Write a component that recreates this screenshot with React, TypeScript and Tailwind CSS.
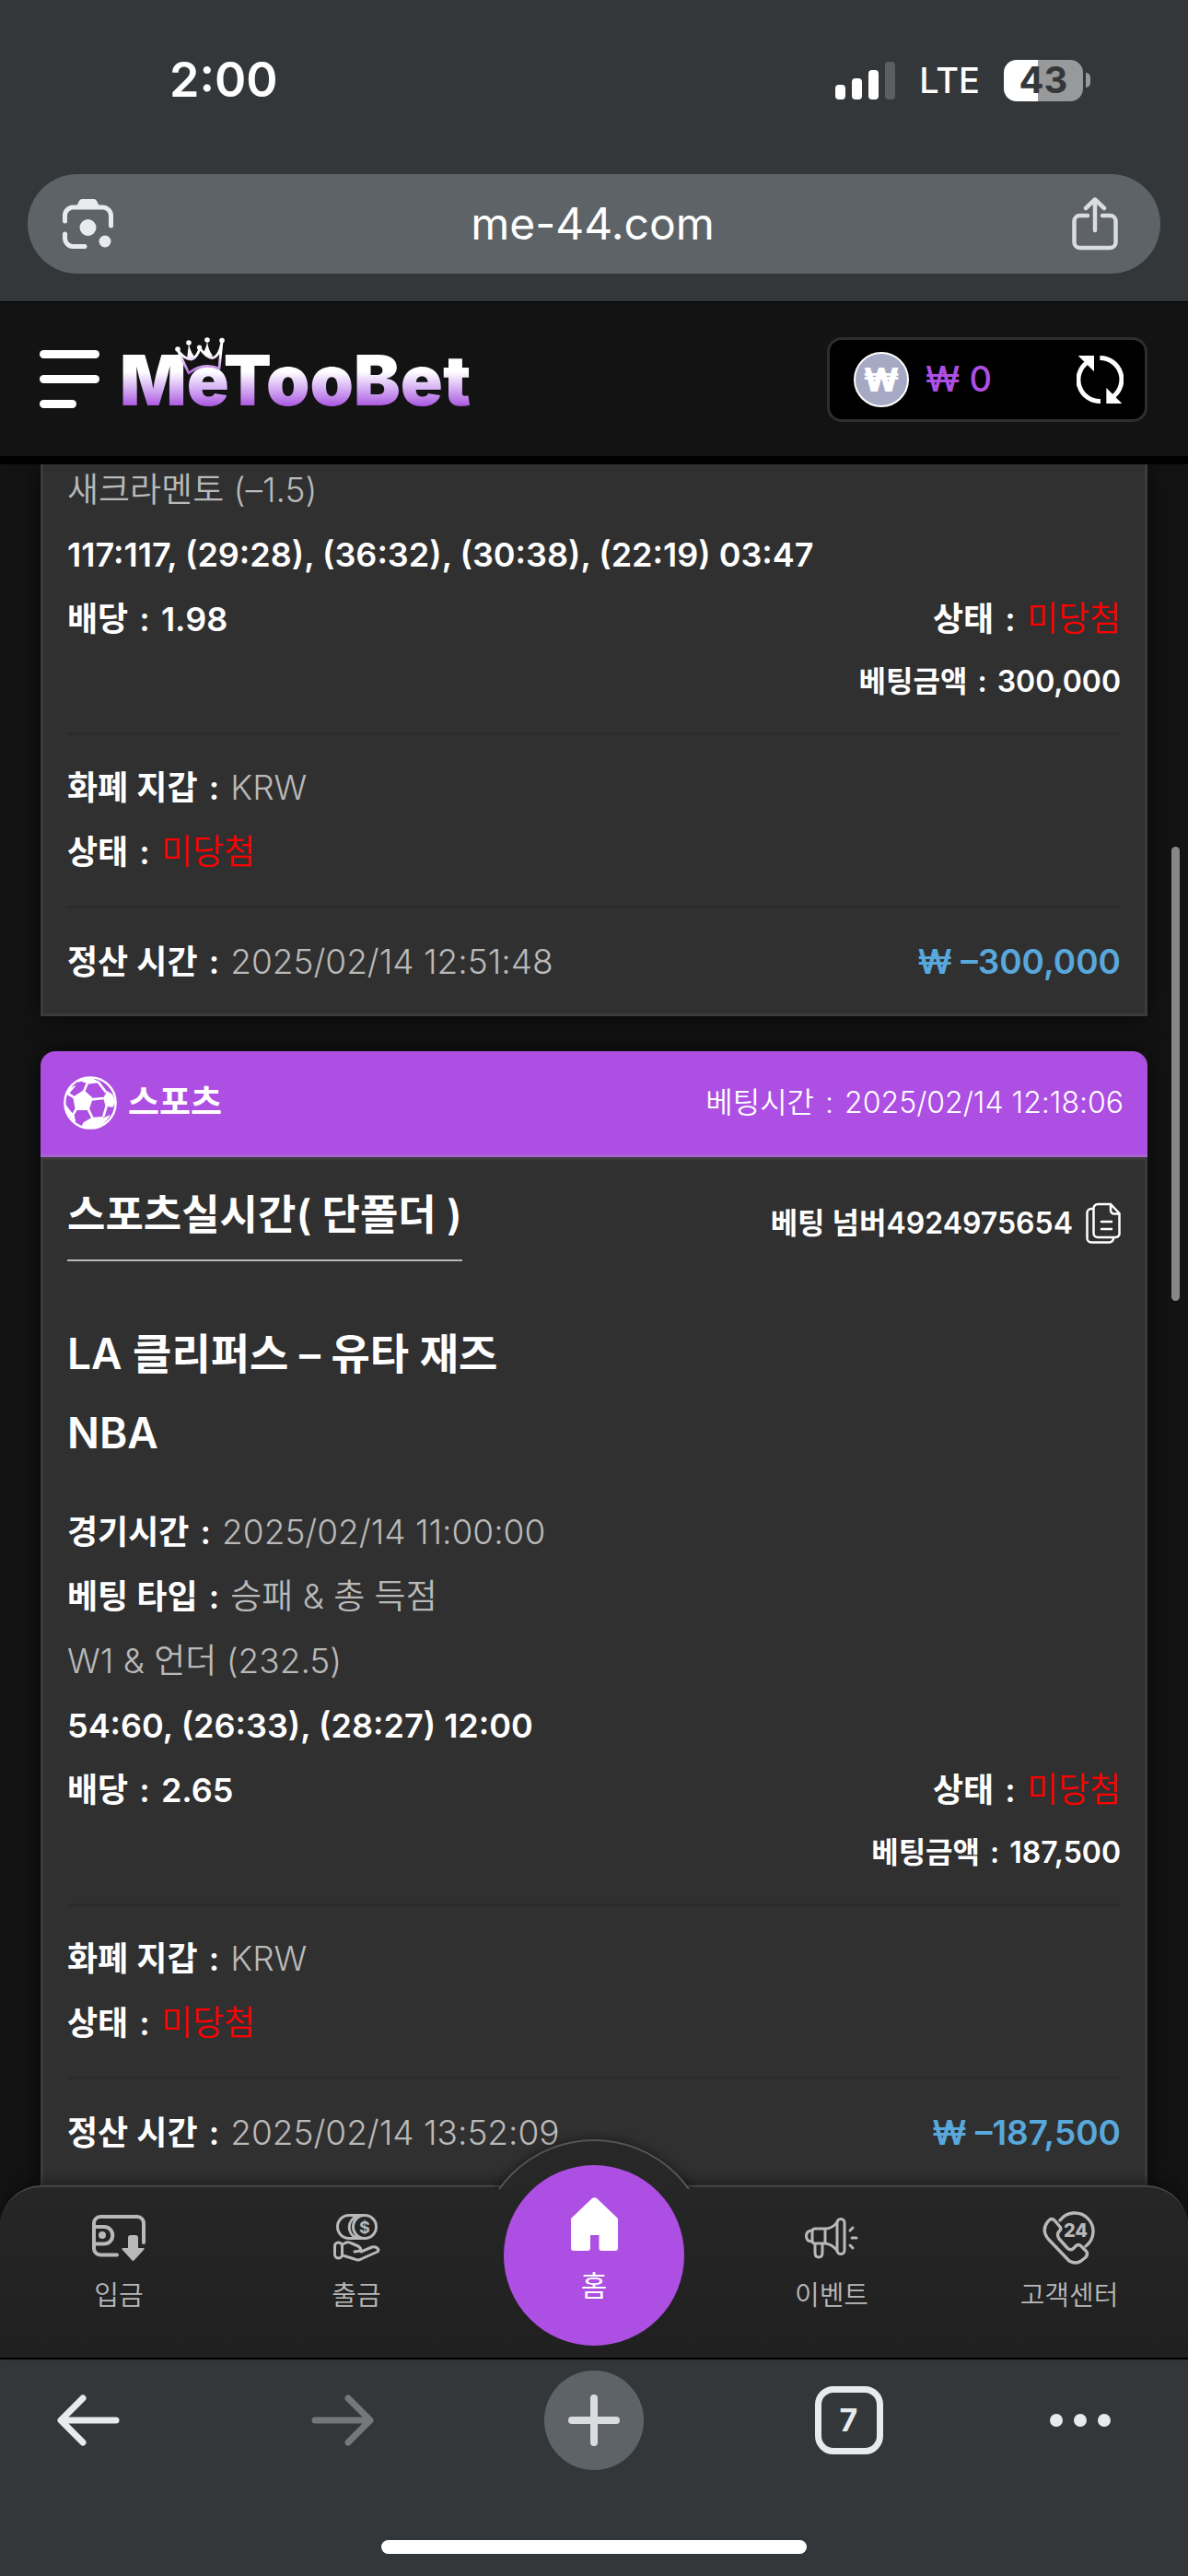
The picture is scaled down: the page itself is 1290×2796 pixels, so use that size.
import type { ReactNode } from "react";

function LensIcon() {
  return (
    <svg viewBox="0 0 55 55" className="size-[55px]" fill="none" stroke="#e8ebee" strokeWidth="5" strokeLinecap="round">
      <path d="M2.5 24V18a9 9 0 0 1 9-9H43a9 9 0 0 1 9.500 9V29M2.500 38V42a9 9 0 0 0 9 9.500H24" />
      <path d="M14 10 18 2Q19 0 21 0H34Q36 0 37 2L41 10Z" fill="#e8ebee" stroke="none" />
      <circle cx="27.500" cy="31" r="9" fill="#e8ebee" stroke="none" />
      <circle cx="46" cy="46" r="6.500" fill="#e8ebee" stroke="none" />
    </svg>
  );
}

function ShareIcon() {
  return (
    <svg viewBox="0 0 50 58" className="h-[58px] w-[50px]" fill="none" stroke="#dadce0" strokeWidth="4.500" strokeLinecap="round" strokeLinejoin="round">
      <path d="M17 20H8.500a6 6 0 0 0-6 6V49a6 6 0 0 0 6 6H41.500a6 6 0 0 0 6-6V26a6 6 0 0 0-6-6H33" />
      <path d="M25 36V3M15 12 25 2.500 35 12" />
    </svg>
  );
}

function Crown() {
  return (
    <svg viewBox="0 0 54 42" className="absolute -top-0.5 left-[60px] h-[42px] w-[54px]" fill="none">
      <defs>
        <linearGradient id="crown" x1="0" y1="0" x2="0" y2="42" gradientUnits="userSpaceOnUse">
          <stop offset="0.45" stopColor="#fff" />
          <stop offset="1" stopColor="#a94fdf" />
        </linearGradient>
      </defs>
      <path d="M3 14 15 39Q30 27 48 34L51 5Q48 22 40 22.500 34 22 27 12 24 22 18 24 10 24 3 14Z" fill="#131313" stroke="url(#crown)" strokeWidth="2.800" strokeLinejoin="round" />
      <path d="M15 7Q17 17 22 22L13 24ZM35 4Q34 12 31 16L37 22 41 20Q36 14 35 4Z" fill="url(#crown)" />
      <g fill="#fff">
        <circle cx="3" cy="13" r="2.800" />
        <circle cx="15" cy="6" r="2.800" />
        <circle cx="26.500" cy="11" r="2.600" />
        <circle cx="35" cy="3" r="2.800" />
        <circle cx="51" cy="3.500" r="2.800" />
      </g>
    </svg>
  );
}

function RefreshIcon() {
  return (
    <svg viewBox="0 0 153 156" className="h-[52px] w-[51px]" fill="none" stroke="#fff" strokeWidth="15">
      <path d="M78 148.500A70 70 0 0 1 36 21" />
      <path d="M76 7.500A70 70 0 0 1 118 134" />
      <path d="M5 0H57V52ZM148 156H97V105Z" fill="#fff" stroke="none" />
    </svg>
  );
}

function BallIcon() {
  return (
    <svg viewBox="0 0 174 174" className="size-[58px]" fill="none" stroke="#fff" strokeWidth="8" strokeLinejoin="round">
      <circle cx="87" cy="87" r="83" strokeWidth="7" />
      <path d="M66 50 91 73 80 107 42 107 35 70Z" fill="#fff" />
      <path d="M66 50 78 22M91 76 131 72M80 107 95 138M42 107 29 128M35 70 14 57M78 22 112 18M112 18 138 52M140 97 130 132M95 138 66 155M29 128 36 148M95 138 130 136" />
      <path d="M48 18Q68 5 92 7L112 18 78 23 58 16ZM131 72 142 50 158 60 168 84 160 100 138 97ZM66 152 92 142 130 138 150 128Q126 170 82 170L60 162ZM8 62 18 56 38 32 22 40ZM5 92 20 112 34 128 36 146Q10 124 5 92Z" fill="#fff" strokeWidth="3" />
    </svg>
  );
}

function CopyIcon() {
  return (
    <svg viewBox="0 0 38 46" className="h-[46px] w-[38px]" fill="none" stroke="#fff" strokeWidth="2.500" strokeLinecap="round" strokeLinejoin="round">
      <path d="M27 2H13a4.500 4.500 0 0 0-4.500 4.500V33.500A4.500 4.500 0 0 0 13 38H32.500a4 4 0 0 0 4-4.500V12ZM27 2V8.500a4 4 0 0 0 4 4H36.500M8 7H6a4.500 4.500 0 0 0-4.500 4.500V39A4.500 4.500 0 0 0 6 43.500H26a4.500 4.500 0 0 0 4-5M17 21H28M17 29H28" />
    </svg>
  );
}

function DepositIcon() {
  return (
    <svg viewBox="0 0 58 51" className="h-[51px] w-[58px]" fill="none" stroke="#b9b9b9" strokeWidth="4" strokeLinecap="round">
      <path d="M27 43.500H9a7 7 0 0 1-7-7V9a7 7 0 0 1 7-7H49a7 7 0 0 1 7 7V30" />
      <path d="M3 13H13A9 9 0 0 1 13 31.500H3" />
      <circle cx="11" cy="22" r="4" fill="#b9b9b9" stroke="none" />
      <path d="M39 25Q39 22 42 22H47Q50 22 50 25V36H55Q58 36 56 38L46 49Q44.500 51 43 49L33 38Q31 36 34 36H39Z" fill="#b9b9b9" stroke="none" />
    </svg>
  );
}

function WithdrawIcon() {
  return (
    <svg viewBox="0 0 51 52" className="h-[52px] w-[51px]" fill="none" stroke="#b9b9b9" strokeWidth="3" strokeLinecap="round" strokeLinejoin="round">
      <circle cx="34" cy="14" r="12.500" />
      <path d="M26 2.500A12.500 12.500 0 0 0 25 26M17 1.500A12.500 12.500 0 0 0 17 26.500M17 1.500H34M17 26.500H34" />
      <text x="34" y="20.500" textAnchor="middle" fontSize="18" fontWeight="700" fill="#b9b9b9" stroke="none" fontFamily="Inter">$</text>
      <rect x="1.500" y="31" width="8" height="17" rx="4" />
      <path d="M10 33 14 31Q17 30 20 32L27 35Q30 37 30 40L23 41M30 41 42 36Q47 35 49 39L48 41 30 49Q27 51 23 49L10 45" />
    </svg>
  );
}

function HomeIcon() {
  return (
    <svg viewBox="0 0 51 58" className="h-[58px] w-[51px]" fill="#fff">
      <path d="M22.500 1.500Q25.500-1 28.500 1.500L51 23V55Q51 58 48 58H33Q30.500 58 30.500 55V41H21V55Q21 58 18 58H3Q0 58 0 55V23Z" />
    </svg>
  );
}

function EventIcon() {
  return (
    <svg viewBox="0 0 58 45" className="h-[45px] w-[58px]" fill="none" stroke="#b9b9b9" strokeWidth="3" strokeLinecap="round" strokeLinejoin="round">
      <rect x="35" y="1.500" width="8" height="38" rx="4" />
      <path d="M35 5Q30 12 22 12H11Q8 12 8 15V25Q8 28 11 28H22Q30 29 35 36M22 12V28M8 14Q1.500 14 1.500 20T8 26M11 28V38Q11 43 15 43T19 38V28M49 14 52 11M51 22H56M49 30 52 33" />
    </svg>
  );
}

function SupportIcon() {
  return (
    <svg viewBox="0 0 58 58" className="size-[58px]" fill="none" stroke="#b9b9b9" strokeWidth="3.400" strokeLinecap="round" strokeLinejoin="round">
      <path d="M19 10A20 20 0 1 1 47 38" />
      <path d="M6 11Q10 6 14 11L19 17Q21 20 18 22 15 25 18 30L27 40Q30 43 33 41L36 38Q39 35 42 38L47 43Q50 46 47 50L42 54Q36 58 29 54L7 31Q-2 21 6 11Z" />
      <text x="36" y="28" textAnchor="middle" fontSize="20" fontWeight="800" fill="#b9b9b9" stroke="none" fontFamily="Inter">24</text>
    </svg>
  );
}

function StatusBar() {
  return (
    <div className="flex h-[174px] items-center justify-between pr-[106px] pl-[184px]">
      <time className="text-[52px] leading-none font-semibold text-white">2:00</time>
      <div className="flex items-center gap-[26px]">
        <div className="flex items-end gap-[7px]">
          <i className="h-4 w-[11px] rounded-sm bg-white" />
          <i className="h-[23px] w-[11px] rounded-sm bg-white" />
          <i className="h-8 w-[11px] rounded-sm bg-white" />
          <i className="h-[41px] w-[11px] rounded-sm bg-[#5c5f61]" />
        </div>
        <span className="text-[38px] leading-none font-medium text-white">LTE</span>
        <div className="flex items-center gap-[3px]">
          <div className="flex h-[45px] w-[86px] items-center justify-center rounded-[14px] bg-linear-to-r from-white from-43% to-[#98999b] to-43% text-[40px] font-bold text-[#333739]">
            43
          </div>
          <i className="h-4 w-[5px] rounded-r-full bg-[#98999b]" />
        </div>
      </div>
    </div>
  );
}

function AddressBar() {
  return (
    <div className="px-[30px] pt-[15px] pb-[30px]">
      <div className="flex h-[108px] items-center justify-between rounded-full bg-[#5e6367] px-[38px]">
        <button aria-label="Lens"><LensIcon /></button>
        <a href="#" className="text-[48px] leading-none text-white">me-44.com</a>
        <button aria-label="Share" className="pr-2"><ShareIcon /></button>
      </div>
    </div>
  );
}

function SiteHeader() {
  return (
    <header className="flex h-[177px] items-center justify-between border-t border-b-[9px] border-black bg-[#131313] pr-11 pl-[43px]">
      <div className="flex items-center gap-[22px]">
        <button aria-label="Menu" className="flex flex-col gap-[18px]">
          <i className="h-[9px] w-[65px] rounded-full bg-white" />
          <i className="h-[9px] w-[65px] rounded-full bg-white" />
          <i className="h-[9px] w-10 rounded-full bg-white" />
        </button>
        <a href="#" className="relative block">
          <span className="block bg-linear-to-b from-white from-40% to-[#a64bdd] to-85% bg-clip-text font-['Inter'] text-[76px] leading-[88px] font-black text-transparent">
            MeTooBet
          </span>
          <Crown />
        </a>
      </div>
      <div className="flex h-[92px] w-[348px] items-center rounded-2xl border-[3px] border-[#2e2e2e] bg-black pr-[23px] pl-[26px]">
        <span className="flex size-[60px] items-center justify-center rounded-full border-2 border-white bg-[#a6a9c4] text-[36px] leading-none font-black text-white">₩</span>
        <span className="ml-[18px] flex-1 text-[38px] font-medium text-[#ad4fe3]">₩ 0</span>
        <button aria-label="Refresh"><RefreshIcon /></button>
      </div>
    </header>
  );
}

function Colon() {
  return <span className="mx-[3px]"> : </span>;
}

function Line({ label, children }: { label?: string; children: ReactNode }) {
  return (
    <p className="text-[37px] font-[350] text-[#b9b9b9]">
      {label && <b className="text-[36px] font-semibold text-white">{label}<Colon /></b>}
      {children}
    </p>
  );
}

type Bet = { pick: string; score: string; odds: string; stake: string; settled: string; result: string };

function Summary({ bet }: { bet: Bet }) {
  return (
    <div className="text-[36px] leading-14">
      <div className="flex flex-col gap-3.5 border-b-[3px] border-[#2b2b2b] pb-[29px]">
        <Line>{bet.pick}</Line>
        <p className="font-semibold">{bet.score}</p>
        <div className="flex justify-between">
          <p className="font-semibold">배당<Colon />{bet.odds}</p>
          <Line label="상태"><span className="text-[#ff0000]">미당첨</span></Line>
        </div>
        <p className="text-right text-[32px] leading-[52px] font-semibold">베팅금액<Colon />{bet.stake}</p>
      </div>
      <div className="flex flex-col gap-3.5 border-b-[3px] border-[#2b2b2b] pt-[29px] pb-[30px]">
        <Line label="화폐 지갑">KRW</Line>
        <Line label="상태"><span className="text-[#ff0000]">미당첨</span></Line>
      </div>
      <div className="flex justify-between pt-[30px] pb-7">
        <Line label="정산 시간">{bet.settled}</Line>
        <p className="text-[37px] font-semibold text-[#58a8dc]">₩ {bet.result}</p>
      </div>
    </div>
  );
}

function NavItem({ icon, label }: { icon: ReactNode; label: string }) {
  return (
    <a href="#" className="flex flex-1 flex-col items-center gap-3.5 pt-[26px] text-[29px] leading-10 font-[350] text-[#b9b9b9]">
      <span className="flex h-[58px] items-center">{icon}</span>
      {label}
    </a>
  );
}

function BottomNav() {
  return (
    <nav className="relative flex h-[189px] shrink-0 rounded-t-[45px] border-t-2 border-b-2 border-t-[#444] border-b-black bg-linear-to-b from-[#262626] to-[#202020] shadow-[0_-6px_12px_rgba(0,0,0,0.3)]">
      <div className="absolute -top-[60px] left-1/2 h-[62px] w-[220px] -translate-x-1/2 overflow-hidden">
        <div className="absolute top-2 left-1/2 size-[255px] -translate-x-1/2 rounded-full border-2 border-[#555] bg-[#272727] shadow-[0_0_12px_rgba(0,0,0,0.5)]" />
      </div>
      <NavItem icon={<DepositIcon />} label="입금" />
      <NavItem icon={<WithdrawIcon />} label="출금" />
      <div className="relative flex-1">
        <a href="#" className="absolute -top-6 left-1/2 flex size-[196px] -translate-x-1/2 flex-col items-center gap-3.5 rounded-full bg-[#ad4fe3] pt-[35px] text-[31px] leading-12 text-white">
          <HomeIcon />
          홈
        </a>
      </div>
      <NavItem icon={<EventIcon />} label="이벤트" />
      <NavItem icon={<SupportIcon />} label="고객센터" />
    </nav>
  );
}

function Arrow({ className }: { className: string }) {
  return (
    <svg viewBox="0 0 68 56" className={className} fill="none" stroke="currentColor" strokeWidth="7" strokeLinecap="round" strokeLinejoin="round">
      <path d="M64 28H5M28 4 4 28 28 52" />
    </svg>
  );
}

function BrowserToolbar() {
  return (
    <footer className="flex h-[235px] shrink-0 flex-col justify-between pt-3 pb-6 text-[#e8ebee]">
      <div className="flex h-[108px] items-center justify-between pr-[84px] pl-[62px]">
        <button aria-label="Back" className="w-[68px]"><Arrow className="h-14 w-[68px]" /></button>
        <button aria-label="Forward" disabled className="ml-28 w-[68px] text-[#75777a]"><Arrow className="h-14 w-[68px] rotate-180" /></button>
        <button aria-label="New tab" className="mx-[90px] flex size-[108px] items-center justify-center rounded-full bg-[#5e6367]">
          <svg viewBox="0 0 56 56" className="size-14" stroke="#dadce0" strokeWidth="8" strokeLinecap="round">
            <path d="M28 4V52M4 28H52" />
          </svg>
        </button>
        <button aria-label="Tabs" className="mr-[86px] flex size-[74px] items-center justify-center rounded-[20px] border-[7px] border-[#e8ebee] text-[34px] leading-none font-bold">7</button>
        <button aria-label="More" className="flex gap-3">
          <i className="size-3.5 rounded-full bg-[#e8ebee]" />
          <i className="size-3.5 rounded-full bg-[#e8ebee]" />
          <i className="size-3.5 rounded-full bg-[#e8ebee]" />
        </button>
      </div>
      <i className="mx-auto h-[15px] w-[462px] rounded-full bg-white" />
    </footer>
  );
}

const first: Bet = {
  pick: "새크라멘토 (–1.5)",
  score: "117:117, (29:28), (36:32), (30:38), (22:19) 03:47",
  odds: "1.98",
  stake: "300,000",
  settled: "2025/02/14 12:51:48",
  result: "–300,000",
};

const second: Bet = {
  pick: "W1 & 언더 (232.5)",
  score: "54:60, (26:33), (28:27) 12:00",
  odds: "2.65",
  stake: "187,500",
  settled: "2025/02/14 13:52:09",
  result: "–187,500",
};

export default function App() {
  return (
    <div className="flex h-screen min-h-[2796px] flex-col bg-[#333739] font-['Inter','Noto_Sans_CJK_KR',sans-serif]">
      <StatusBar />
      <AddressBar />
      <SiteHeader />
      <div className="flex min-h-0 flex-1 flex-col bg-[#131313] text-white">
        <main className="relative min-h-0 flex-1 overflow-hidden px-11">
          <i className="absolute top-[415px] right-[9px] h-[493px] w-[9px] rounded-full bg-[#878787]" />
          <article className="border-[3px] border-t-0 border-[#3b3b3d] bg-[#303030] px-[26px] shadow-[0_0_24px_rgba(0,0,0,0.6)]">
            <Summary bet={first} />
          </article>
          <article className="mt-[38px] shadow-[0_0_24px_rgba(0,0,0,0.6)]">
            <header className="flex h-[115px] items-center justify-between rounded-t-2xl border-b-[3px] border-[#a864cf] bg-[#ad4fe3] pr-[26px] pl-[25px]">
              <h2 className="flex items-center gap-3 text-[37px] font-bold"><BallIcon />스포츠</h2>
              <p className="text-[32px] font-[350]">베팅시간<Colon />2025/02/14 12:18:06</p>
            </header>
            <div className="border-[3px] border-[#3b3b3d] bg-[#303030] px-[26px] pt-7">
              <div className="flex items-center justify-between">
                <h3 className="border-b-2 border-[#b9b9b9] pb-4 text-[45px] leading-16 font-semibold">스포츠실시간( 단폴더 )</h3>
                <button className="flex items-center gap-3.5 text-[32px] font-semibold">베팅 넘버4924975654<CopyIcon /></button>
              </div>
              <div className="mt-16 mb-11 flex flex-col gap-3.5 text-[46px] leading-18 font-semibold">
                <p>LA 클리퍼스 – 유타 재즈</p>
                <p>NBA</p>
              </div>
              <div className="mb-3.5 flex flex-col gap-3.5 text-[36px] leading-14">
                <Line label="경기시간">2025/02/14 11:00:00</Line>
                <Line label="베팅 타입">승패 &amp; 총 득점</Line>
              </div>
              <Summary bet={second} />
            </div>
          </article>
        </main>
        <BottomNav />
      </div>
      <BrowserToolbar />
    </div>
  );
}
